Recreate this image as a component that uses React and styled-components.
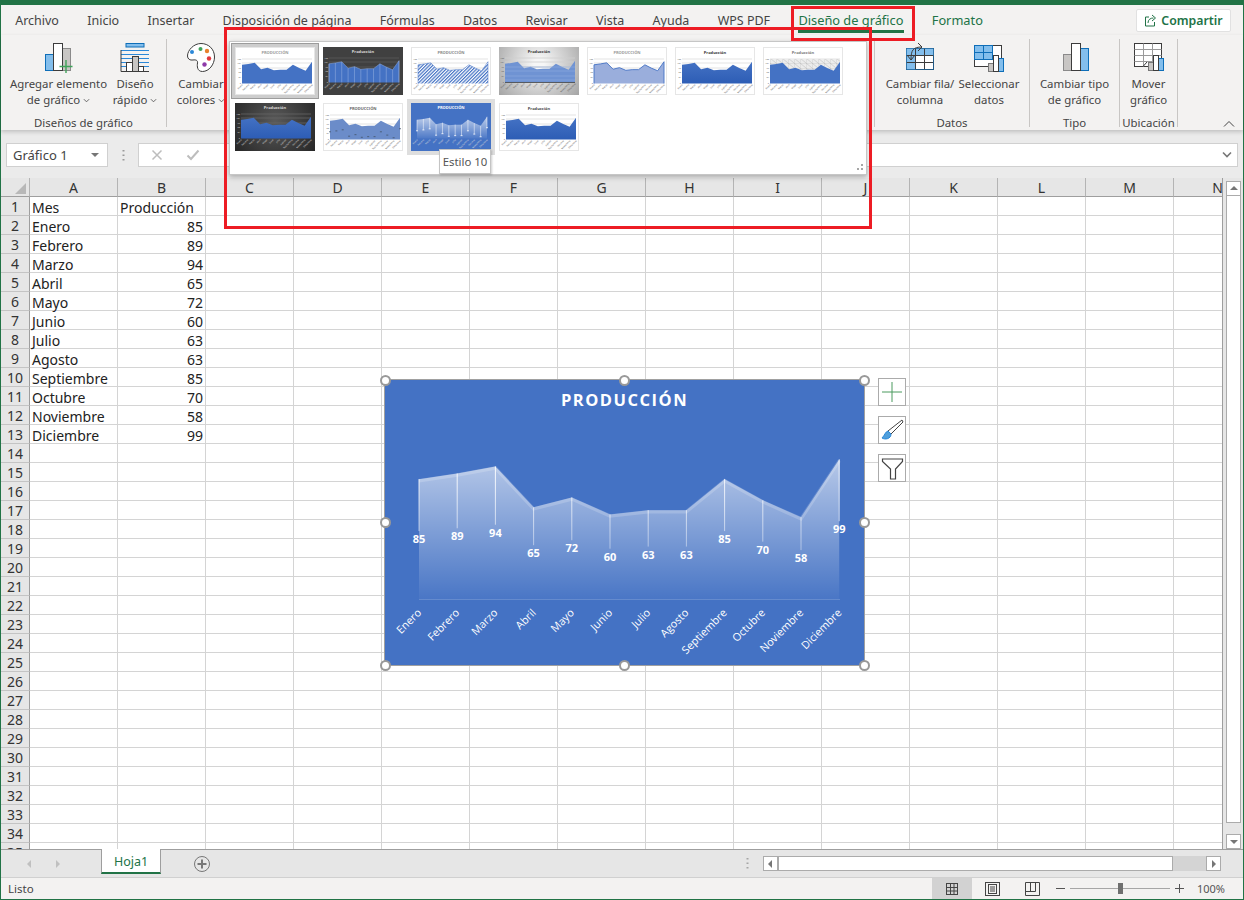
import React from 'react';
import styled, { createGlobalStyle } from 'styled-components';

const GREEN = '#217346';
const UI_FONT = '"Noto Sans", "Open Sans", sans-serif';

const GlobalStyle = createGlobalStyle`
  html, body {
    margin: 0;
    padding: 0;
    background: #fff;
    font-family: ${UI_FONT};
    overflow: hidden;
  }
`;

const Window = styled.div`
  position: relative;
  box-sizing: border-box;
  width: 1244px;
  height: 900px;
  padding: 5px 1px 1px;
  background: ${GREEN};
  display: flex;
  flex-direction: column;
  overflow: hidden;
`;

/* ---------- tabs ---------- */

const TabBar = styled.div`
  height: 30px;
  flex: none;
  display: flex;
  align-items: center;
  background: #f3f2f1;
`;

const Tab = styled.div`
  position: relative;
  height: 30px;
  line-height: 31px;
  padding: 0 14.15px;
  font-size: ${p => (p.$context ? 12.8 : 12.5)}px;
  white-space: nowrap;
  color: ${p => (p.$context ? GREEN : '#444')};

  ${p =>
    p.$active &&
    `&::after {
      content: '';
      position: absolute;
      left: 14px;
      right: 14px;
      bottom: 2px;
      height: 3px;
      background: ${GREEN};
    }`}
`;

const ShareButton = styled.div`
  box-sizing: border-box;
  margin-left: auto;
  margin-right: 12px;
  width: 95px;
  height: 23px;
  display: flex;
  align-items: center;
  justify-content: center;
  gap: 4px;
  background: #fff;
  border: 1px solid #e1e1e1;
  border-radius: 2px;
  color: ${GREEN};
  font-size: 12.3px;
  font-weight: 600;
`;

/* ---------- ribbon ---------- */

const Ribbon = styled.div`
  position: relative;
  z-index: 2;
  height: 95px;
  flex: none;
  display: flex;
  align-items: flex-start;
  background: #f3f2f1;
  box-shadow: 0 2px 4px rgba(0, 0, 0, 0.18);
`;

const Group = styled.div`
  box-sizing: border-box;
  width: ${p => p.$width}px;
  height: 95px;
  padding-top: 7px;
  display: flex;
  flex-direction: column;
`;

const GroupButtons = styled.div`
  display: flex;
  height: 66px;
  padding-left: ${p => p.$pad || 0}px;
  justify-content: ${p => (p.$pad ? 'flex-start' : 'center')};
`;

const GroupTitle = styled.div`
  margin-top: 8px;
  height: 14px;
  line-height: 14px;
  font-size: 11.4px;
  color: #444;
  text-align: center;
  white-space: nowrap;
`;

const Separator = styled.div`
  flex: none;
  width: 1px;
  height: 88px;
  margin-top: 4px;
  background: #c8c6c4;
`;

const RibbonButton = styled.div`
  flex: none;
  width: ${p => p.$width}px;
  display: flex;
  flex-direction: column;
  align-items: center;
`;

const IconSlot = styled.div`
  height: 32px;
  margin-bottom: 2px;
  display: flex;
  align-items: center;
  justify-content: center;
`;

const ButtonLabel = styled.div`
  font-size: 11.4px;
  line-height: 16px;
  color: #444;
  text-align: center;
  white-space: nowrap;
`;

const CollapseButton = styled.div`
  margin-left: auto;
  margin-right: 8px;
  margin-top: 85px;
  width: 12px;
  height: 8px;
  display: flex;
`;

/* ---------- formula bar ---------- */

const FormulaArea = styled.div`
  height: 48px;
  flex: none;
  box-sizing: border-box;
  padding: 13px 5px 11px;
  display: flex;
  align-items: stretch;
  background: #ebebeb;
`;

const NameBox = styled.div`
  box-sizing: border-box;
  width: 102px;
  padding: 0 7px 0 6px;
  display: flex;
  align-items: center;
  justify-content: space-between;
  background: #fff;
  border: 1px solid #d0d0d0;
  font-size: 13px;
  color: #444;
`;

const GripDots = styled.div`
  flex: none;
  width: 30px;
  display: flex;
  align-items: center;
  justify-content: center;
`;

const FormulaTools = styled.div`
  flex: none;
  box-sizing: border-box;
  width: 100px;
  display: flex;
  align-items: center;
  gap: 23px;
  padding-left: 12px;
  background: #fff;
  border: 1px solid #d0d0d0;
  border-right: 0;
`;

const FormulaInput = styled.div`
  flex: 1;
  display: flex;
  align-items: center;
  justify-content: flex-end;
  padding-right: 4px;
  background: #fff;
  border: 1px solid #d0d0d0;
  border-left: 0;
`;

/* ---------- sheet ---------- */

const Sheet = styled.div`
  flex: 1;
  min-height: 0;
  display: flex;
  background: #e6e6e6;
`;

const GridArea = styled.div`
  width: 1221px;
  flex: none;
  overflow: hidden;
  background: #fff;
`;

const Row = styled.div`
  display: grid;
  grid-template-columns: 29px repeat(14, 88px);
  grid-template-rows: 19px;
  height: 19px;
`;

const Corner = styled.div`
  box-sizing: border-box;
  position: relative;
  background: #e6e6e6;
  border-right: 1px solid #b4b4b4;
  border-bottom: 1px solid #9e9e9e;
  &::after {
    content: '';
    position: absolute;
    right: 3px;
    bottom: 2px;
    border-style: solid;
    border-width: 0 0 11px 11px;
    border-color: transparent transparent #b8b8b8 transparent;
  }
`;

const ColumnHeader = styled.div`
  box-sizing: border-box;
  height: 19px;
  background: #e6e6e6;
  border-right: 1px solid #b4b4b4;
  border-bottom: 1px solid #9e9e9e;
  font-size: 14px;
  line-height: 20px;
  color: #333;
  text-align: center;
`;

const RowHeader = styled.div`
  box-sizing: border-box;
  height: 19px;
  background: #e6e6e6;
  border-right: 1px solid #9e9e9e;
  border-bottom: 1px solid #c4c4c4;
  font-size: 14px;
  line-height: 20px;
  color: #333;
  text-align: center;
`;

const Cell = styled.div`
  box-sizing: border-box;
  height: 19px;
  padding: 0 2px;
  border-right: 1px solid #d4d4d4;
  border-bottom: 1px solid #d4d4d4;
  font-size: 14px;
  line-height: 21px;
  color: #222;
  white-space: nowrap;
  text-align: ${p => (p.$number ? 'right' : 'left')};
`;

const VScroll = styled.div`
  flex: 1;
  box-sizing: border-box;
  padding: 3px 3px 0;
  display: flex;
  flex-direction: column;
  border-left: 1px solid #9e9e9e;
`;

const ScrollButton = styled.div`
  box-sizing: border-box;
  flex: none;
  width: 15px;
  height: 15px;
  display: flex;
  align-items: center;
  justify-content: center;
  background: #fff;
  border: 1px solid #ababab;
`;

const VScrollThumb = styled.div`
  box-sizing: border-box;
  flex: none;
  width: 15px;
  height: 627px;
  background: #fff;
  border: 1px solid #ababab;
  border-top: 0;
`;

const VScrollTrack = styled.div`
  flex: 1;
`;

/* ---------- sheet tabs ---------- */

const SheetBar = styled.div`
  box-sizing: border-box;
  height: 28px;
  flex: none;
  display: flex;
  align-items: center;
  background: #e6e6e6;
  border-top: 1px solid #9e9e9e;
`;

const SheetNav = styled.div`
  width: 100px;
  flex: none;
  display: flex;
  gap: 18px;
  padding-left: 24px;
  box-sizing: border-box;
`;

const SheetTab = styled.div`
  box-sizing: border-box;
  flex: none;
  align-self: flex-start;
  margin-top: -1px;
  width: 60px;
  height: 25px;
  line-height: 25px;
  text-align: center;
  font-size: 12.5px;
  color: ${GREEN};
  background: #fff;
  border-left: 1px solid #9e9e9e;
  border-right: 1px solid #9e9e9e;
  border-bottom: 2px solid ${GREEN};
`;

const AddSheet = styled.div`
  flex: none;
  margin-left: 32px;
  display: flex;
`;

const BarSpacer = styled.div`
  flex: 1;
`;

const BarDots = styled.div`
  flex: none;
  width: 16px;
  display: flex;
  justify-content: center;
`;

const HScroll = styled.div`
  flex: none;
  box-sizing: border-box;
  width: 458px;
  height: 15px;
  margin-left: 8px;
  margin-right: 22px;
  display: flex;
  background: #d4d4d4;
`;

const HScrollThumb = styled.div`
  box-sizing: border-box;
  width: 395px;
  flex: none;
  background: #fff;
  border: 1px solid #ababab;
`;

/* ---------- status bar ---------- */

const StatusBar = styled.div`
  box-sizing: border-box;
  height: 22px;
  flex: none;
  display: flex;
  align-items: center;
  padding-left: 7px;
  background: #f3f2f1;
  border-top: 1px solid #d0d0d0;
  font-size: 11.5px;
  color: #444;
`;

const StatusRight = styled.div`
  margin-left: auto;
  height: 100%;
  display: flex;
  align-items: center;
`;

const ViewButton = styled.div`
  width: 40px;
  height: 100%;
  display: flex;
  align-items: center;
  justify-content: center;
  background: ${p => (p.$active ? '#d2d2d2' : 'transparent')};
`;

const ZoomSlider = styled.div`
  position: relative;
  width: 100px;
  height: 1px;
  margin: 0 3px;
  background: #a6a6a6;
`;

const ZoomThumb = styled.div`
  position: absolute;
  left: 48px;
  top: -5px;
  width: 5px;
  height: 11px;
  background: #6f6f6f;
`;

const ZoomGlyph = styled.div`
  display: flex;
  margin-left: ${p => p.$gap || 2}px;
  margin-right: 2px;
`;

const ZoomValue = styled.div`
  width: 30px;
  margin-left: 10px;
  margin-right: 17px;
  font-size: 11px;
  text-align: center;
  color: #555;
`;

/* ---------- style gallery over the ribbon ---------- */

const Gallery = styled.div`
  position: absolute;
  z-index: 5;
  left: 229px;
  top: 41px;
  box-sizing: border-box;
  width: 638px;
  height: 134px;
  padding: 1px;
  background: #fff;
  border: 1px solid #c6c6c6;
  box-shadow: 0 2px 5px rgba(0, 0, 0, 0.28);
`;

const GalleryGrid = styled.div`
  display: grid;
  grid-template-columns: repeat(7, 88px);
  grid-auto-rows: 56px;
`;

const GalleryCell = styled.div`
  box-sizing: border-box;
  display: flex;
  align-items: center;
  justify-content: center;
  background: ${p => (p.$selected ? '#cdcdcd' : p.$hover ? '#dedede' : 'transparent')};
  border: ${p => (p.$selected ? '1px solid #9c9c9c' : '1px solid transparent')};
`;

const ThumbFrame = styled.div`
  box-sizing: border-box;
  width: 80px;
  height: 48px;
  display: flex;
  background: ${p => p.$bg};
  border: ${p => (p.$border ? '1px solid #e6e6e6' : 'none')};
`;

const ResizeGrip = styled.div`
  position: absolute;
  right: 3px;
  bottom: 3px;
  display: flex;
`;

const Tooltip = styled.div`
  position: absolute;
  z-index: 6;
  left: 439px;
  top: 149px;
  box-sizing: border-box;
  width: 52px;
  height: 25px;
  line-height: 23px;
  text-align: center;
  font-size: 11.4px;
  color: #555;
  background: #fff;
  border: 1px solid #c4c4c4;
  box-shadow: 1px 1px 2px rgba(0, 0, 0, 0.2);
`;

const RedMark = styled.div`
  position: absolute;
  z-index: 7;
  box-sizing: border-box;
  left: ${p => p.$left}px;
  top: ${p => p.$top}px;
  width: ${p => p.$width}px;
  height: ${p => p.$height}px;
  border: 3px solid #ed1c24;
  pointer-events: none;
`;

/* ---------- chart on the sheet ---------- */

const ChartBox = styled.div`
  position: absolute;
  z-index: 1;
  left: 384px;
  top: 379px;
  box-sizing: border-box;
  width: 481px;
  height: 287px;
  background: #4472c4;
  border: 1px solid #a0a0a0;
  display: flex;
`;

const Handle = styled.div`
  position: absolute;
  left: ${p => p.$x}%;
  top: ${p => p.$y}%;
  box-sizing: border-box;
  width: 11px;
  height: 11px;
  margin: -5.5px 0 0 -5.5px;
  background: #fff;
  border: 2px solid #999;
  border-radius: 50%;
`;

const ChartTools = styled.div`
  position: absolute;
  z-index: 1;
  left: 878px;
  top: 378px;
  display: flex;
  flex-direction: column;
  gap: 10px;
`;

const ChartTool = styled.div`
  box-sizing: border-box;
  width: 28px;
  height: 28px;
  display: flex;
  align-items: center;
  justify-content: center;
  background: #fff;
  border: 1px solid #ababab;
`;

/* ---------- data ---------- */

const tabs = [
  'Archivo',
  'Inicio',
  'Insertar',
  'Disposición de página',
  'Fórmulas',
  'Datos',
  'Revisar',
  'Vista',
  'Ayuda',
  'WPS PDF',
];

const columns = 'ABCDEFGHIJKLMN'.split('');

const months = [
  'Enero',
  'Febrero',
  'Marzo',
  'Abril',
  'Mayo',
  'Junio',
  'Julio',
  'Agosto',
  'Septiembre',
  'Octubre',
  'Noviembre',
  'Diciembre',
];

const values = [85, 89, 94, 65, 72, 60, 63, 63, 85, 70, 58, 99];

const handles = [
  [0, 0],
  [50, 0],
  [100, 0],
  [0, 50],
  [100, 50],
  [0, 100],
  [50, 100],
  [100, 100],
];

const thumbs = [
  { id: 1, bg: '#fff', border: true, title: 'PRODUCCIÓN', titleColor: '#999', fill: '#4472c4' },
  { id: 2, bg: '#404040', title: 'Producción', titleColor: '#ddd', fill: '#4472c4', stroke: '#8faadc', drops: '#9db5e2', grid: '#5c5c5c', dark: true },
  { id: 3, bg: '#fff', border: true, title: 'PRODUCCIÓN', titleColor: '#888', fill: 'hatch', stroke: '#4472c4' },
  { id: 4, bg: 'radial-gradient(circle at 50% 35%, #f6f6f6 10%, #a4a4a4 100%)', title: 'Producción', titleColor: '#333', fill: '#6f93d3', floor: '#444', grid: '#cfcfcf', bands: true },
  { id: 5, bg: '#fff', border: true, title: 'PRODUCCIÓN', titleColor: '#999', fill: '#9aaedc', stroke: '#4472c4', strokeWidth: 0.9 },
  { id: 6, bg: '#fff', border: true, title: 'Producción', titleColor: '#333', fill: 'blue' },
  { id: 7, bg: '#fff', border: true, title: 'Producción', titleColor: '#777', fill: '#4472c4', sky: true },
  { id: 8, bg: 'radial-gradient(circle at 50% 40%, #5a5a5a 0%, #262626 100%)', title: 'Producción', titleColor: '#ddd', fill: 'blue', grid: '#666', dark: true },
  { id: 9, bg: '#fff', border: true, title: 'PRODUCCIÓN', titleColor: '#666', fill: '#6b8cc9', marks: '#44546a' },
  { id: 10, bg: '#4472c4', title: 'PRODUCCIÓN', titleColor: '#fff', fill: 'white', drops: '#fff', marks: '#fff', dark: true, noGrid: true },
  { id: 11, bg: '#fff', border: true, title: 'Producción', titleColor: '#444', fill: 'blue' },
];

/* ---------- small drawings ---------- */

const Chevron = ({ size = 7, color = '#555' }) => (
  <svg width={size} height={size} viewBox="0 0 8 8" style={{ marginLeft: 3 }}>
    <path d="M1 2.5 L4 5.5 L7 2.5" fill="none" stroke={color} strokeWidth="1" />
  </svg>
);

const AddElementIcon = () => (
  <svg width="32" height="32" viewBox="0 0 32 32">
    <rect x="2.5" y="12.5" width="8" height="16" fill="#83beec" stroke="#0e6eb8" />
    <rect x="19.5" y="6.5" width="8" height="22" fill="#c8c6c4" stroke="#8a8a8a" />
    <rect x="10.5" y="1.5" width="9" height="27" fill="#fff" stroke="#3c3c3c" />
    <path d="M23 18 V31 M16.5 24.5 H29.5" stroke="#3fa35a" strokeWidth="1.4" fill="none" />
  </svg>
);

const QuickLayoutIcon = () => (
  <svg width="30" height="32" viewBox="0 0 30 32">
    <rect x="6" y="1.5" width="18" height="3.5" fill="#83beec" stroke="#0e6eb8" />
    <path d="M1 8.5 H29 M1 12.5 H29 M1 16.5 H29 M1 20.5 H29 M1 24.5 H29" stroke="#2b88d8" fill="none" />
    <path d="M1 8 V29.5 H29" stroke="#3c3c3c" fill="none" />
    <rect x="12.5" y="14.5" width="6" height="15" fill="#c8c6c4" stroke="#3c3c3c" />
    <rect x="6.5" y="20.5" width="6" height="9" fill="#fff" stroke="#3c3c3c" />
    <rect x="18.5" y="24.5" width="5" height="5" fill="#fff" stroke="#3c3c3c" />
  </svg>
);

const PaletteIcon = () => (
  <svg width="30" height="32" viewBox="0 0 30 32">
    <path
      d="M15 1.5 C8 1.5 1.5 8 1.5 14 C1.5 17 4 18.5 7 18 C10 17.5 12 18.5 11.5 21 C11 24 11 29.5 16.5 29.5 C23 29.5 28.5 22.5 28.5 15 C28.5 7 22.5 1.5 15 1.5 Z"
      fill="#fff"
      stroke="#3c3c3c"
    />
    <circle cx="14.5" cy="7" r="2" fill="#3fa35a" />
    <circle cx="6" cy="10" r="2" fill="#2b88d8" />
    <circle cx="21" cy="9" r="2.2" fill="#e8822e" />
    <circle cx="23" cy="16.5" r="2.2" fill="#e0383e" />
    <circle cx="18.5" cy="22.5" r="2.2" fill="#8e3aa8" />
  </svg>
);

const SwitchRowColumnIcon = () => (
  <svg width="32" height="32" viewBox="0 0 32 32">
    <rect x="2.5" y="6.5" width="27" height="21" fill="#fff" stroke="#3c3c3c" />
    <rect x="2.5" y="6.5" width="27" height="7" fill="#83beec" />
    <rect x="2.5" y="6.5" width="9" height="21" fill="#83beec" />
    <path d="M2.5 13.5 H29.5 M2.5 20.5 H29.5 M11.5 6.5 V27.5 M20.5 6.5 V27.5" stroke="#3c3c3c" fill="none" />
    <rect x="2.5" y="6.5" width="27" height="21" fill="none" stroke="#0e6eb8" strokeOpacity="0.6" />
    <path d="M3 13 L7 18 L11 13 M7 18 C7 8 9 5 18 5 M14 1 L18 5 L14 9" fill="none" stroke="#3c3c3c" />
  </svg>
);

const SelectDataIcon = () => (
  <svg width="32" height="32" viewBox="0 0 32 32">
    <rect x="1.5" y="3.5" width="27" height="21" fill="#fff" stroke="#3c3c3c" />
    <rect x="1.5" y="3.5" width="18" height="14" fill="#83beec" stroke="#0e6eb8" />
    <path d="M1.5 10.5 H19.5 M10.5 3.5 V17.5" stroke="#0e6eb8" fill="none" />
    <rect x="15.5" y="21.5" width="5" height="8" fill="#c8c6c4" stroke="#777" />
    <rect x="25.5" y="16.5" width="5" height="13" fill="#83beec" stroke="#0e6eb8" />
    <rect x="20.5" y="13.5" width="5" height="16" fill="#fff" stroke="#3c3c3c" />
  </svg>
);

const ChangeTypeIcon = () => (
  <svg width="28" height="32" viewBox="0 0 28 32">
    <rect x="2.5" y="12.5" width="8" height="16" fill="#c8c6c4" stroke="#8a8a8a" />
    <rect x="19.5" y="6.5" width="8" height="22" fill="#83beec" stroke="#0e6eb8" />
    <rect x="10.5" y="1.5" width="9" height="27" fill="#fff" stroke="#3c3c3c" />
  </svg>
);

const MoveChartIcon = () => (
  <svg width="32" height="32" viewBox="0 0 32 32">
    <rect x="1.5" y="1.5" width="27" height="23" fill="#fff" stroke="#3c3c3c" />
    <path d="M1.5 7.5 H28.5 M1.5 13.5 H28.5 M1.5 19.5 H28.5 M10.5 1.5 V24.5 M19.5 1.5 V24.5" stroke="#9a9a9a" fill="none" />
    <path d="M1.5 24.5 H10 L14 20" fill="none" stroke="#3c3c3c" />
    <rect x="15.5" y="20.5" width="5" height="8" fill="#c8c6c4" stroke="#777" />
    <rect x="25.5" y="16.5" width="5" height="12" fill="#83beec" stroke="#0e6eb8" />
    <rect x="20.5" y="13.5" width="5" height="15" fill="#fff" stroke="#3c3c3c" />
  </svg>
);

const ShareIcon = () => (
  <svg width="13" height="13" viewBox="0 0 13 13">
    <path d="M5 3 H1.5 V12 H10.5 V8" fill="none" stroke="#217346" />
    <path d="M4 9 C4 5.5 6.5 4 9.5 4 M8 1 L11.5 4 L8 7" fill="none" stroke="#217346" />
  </svg>
);

const AreaThumb = ({ spec }) => {
  const width = spec.border ? 78 : 80;
  const height = spec.border ? 46 : 48;
  const px = i => 6 + (i * 70) / 11;
  const py = v => 35.5 - v * 0.22;
  const line = values.map((v, i) => `${px(i)},${py(v)}`).join(' ');
  const area = `6,35.5 ${line} 76,35.5`;
  const sky = `6,11 76,11 ${values
    .map((v, i) => `${px(11 - i)},${py(values[11 - i])}`)
    .join(' ')}`;
  const fills = {
    hatch: `url(#hatch${spec.id})`,
    blue: `url(#blue${spec.id})`,
    white: `url(#white${spec.id})`,
  };
  const gridColor = spec.grid || '#dcdcdc';
  const labelColor = spec.dark ? '#dcdcdc' : '#5c5c5c';

  return (
    <svg width={width} height={height} viewBox={`0 0 ${width} ${height}`}>
      <defs>
        <pattern id={`hatch${spec.id}`} width="2.4" height="2.4" patternUnits="userSpaceOnUse" patternTransform="rotate(45)">
          <rect width="2.4" height="2.4" fill="#fff" />
          <rect width="1.2" height="2.4" fill="#4472c4" />
        </pattern>
        <pattern id={`sky${spec.id}`} width="6" height="5" patternUnits="userSpaceOnUse">
          <rect width="6" height="5" fill="#ececec" />
          <path d="M0 0 L6 5 M0 0 H6 M0 0 V5" stroke="#b4b4b4" strokeWidth="0.5" />
        </pattern>
        <linearGradient id={`blue${spec.id}`} x1="0" y1="0" x2="0" y2="1">
          <stop offset="0" stopColor="#4472c4" />
          <stop offset="1" stopColor="#2d5db5" />
        </linearGradient>
        <linearGradient id={`white${spec.id}`} x1="0" y1="0" x2="0" y2="1">
          <stop offset="0" stopColor="#fff" stopOpacity="0.65" />
          <stop offset="1" stopColor="#fff" stopOpacity="0.05" />
        </linearGradient>
      </defs>
      <text x={width / 2} y="5.5" textAnchor="middle" fontSize="4" fontWeight="700" fontFamily="Open Sans, sans-serif" fill={spec.titleColor}>
        {spec.title}
      </text>
      {!spec.noGrid &&
        [11, 15, 20, 24, 29].map(y => (
          <line key={y} x1="6" x2="76" y1={y} y2={y} stroke={gridColor} strokeWidth="0.8" />
        ))}
      {!spec.noGrid &&
        [11, 15, 20, 24, 29, 35].map(y => (
          <text key={y} x="5" y={y + 0.8} textAnchor="end" fontSize="2.2" fill={labelColor}>
            {Math.round((36 - y) * 4.8)}
          </text>
        ))}
      {spec.sky && <polygon points={sky} fill={`url(#sky${spec.id})`} />}
      <polygon points={area} fill={fills[spec.fill] || spec.fill} />
      {spec.bands &&
        [20, 24, 29, 33].map(y => (
          <line key={y} x1="6" x2="76" y1={y} y2={y} stroke="#8fabdf" strokeWidth="0.6" />
        ))}
      {spec.stroke && (
        <polyline points={area} fill="none" stroke={spec.stroke} strokeWidth={spec.strokeWidth || 0.5} />
      )}
      {spec.drops &&
        values.map((v, i) => (
          <line key={i} x1={px(i)} x2={px(i)} y1={py(v)} y2={spec.marks ? py(v) + 11 : 35.5} stroke={spec.drops} strokeWidth="0.5" />
        ))}
      {spec.marks &&
        values.map((v, i) => (
          <line key={i} x1={px(i) - 1} x2={px(i) + 1} y1={py(v) + 11} y2={py(v) + 11} stroke={spec.marks} strokeWidth="0.8" />
        ))}
      {spec.floor && <line x1="6" x2="76" y1="35.5" y2="35.5" stroke={spec.floor} strokeWidth="0.8" />}
      {months.map((m, i) => (
        <text key={m} x={px(i) + 1} y="37" textAnchor="end" fontSize="2.3" fill={labelColor} transform={`rotate(-45 ${px(i) + 1} 37)`}>
          {m}
        </text>
      ))}
    </svg>
  );
};

const ProductionChart = () => {
  const px = i => 419 + i * 38.2;
  const py = v => 599 - v * 1.41;
  const mid = v => (py(v) + 599) / 2;
  const line = values.map((v, i) => `${px(i)},${py(v)}`).join(' ');

  return (
    <svg width="479" height="285" viewBox="385 380 479 285">
      <defs>
        <linearGradient id="areaFade" gradientUnits="userSpaceOnUse" x1="0" y1="458" x2="0" y2="599">
          <stop offset="0" stopColor="#fff" stopOpacity="0.62" />
          <stop offset="1" stopColor="#fff" stopOpacity="0.03" />
        </linearGradient>
        <linearGradient id="dropFade" gradientUnits="userSpaceOnUse" x1="0" y1="458" x2="0" y2="560">
          <stop offset="0" stopColor="#fff" stopOpacity="1" />
          <stop offset="1" stopColor="#fff" stopOpacity="0.35" />
        </linearGradient>
      </defs>
      <text x="624.5" y="406" textAnchor="middle" fontSize="16.5" fontWeight="700" letterSpacing="1.5" fontFamily="Open Sans, sans-serif" fill="#fff">
        PRODUCCIÓN
      </text>
      <polygon points={`419,599 ${line} 839.2,599`} fill="url(#areaFade)" />
      <polyline points={line} fill="none" stroke="#fff" strokeOpacity="0.18" strokeWidth="3.5" transform="translate(0 1.5)" />
      <line x1="419" x2="840" y1="599.5" y2="599.5" stroke="#fff" strokeOpacity="0.18" />
      {values.map((v, i) => (
        <line key={i} x1={px(i)} x2={px(i)} y1={py(v)} y2={mid(v) - 8} stroke="url(#dropFade)" strokeWidth="1" />
      ))}
      {values.map((v, i) => (
        <text key={i} x={px(i)} y={mid(v) + 4} textAnchor="middle" fontSize="11" fontWeight="700" fontFamily="Open Sans, sans-serif" fill="#fff">
          {v}
        </text>
      ))}
      {months.map((m, i) => (
        <text key={m} x={px(i) + 3} y="613.5" textAnchor="end" fontSize="10.8" fontFamily="Open Sans, sans-serif" fill="#fff" transform={`rotate(-45 ${px(i) + 3} 613.5)`}>
          {m}
        </text>
      ))}
    </svg>
  );
};

const Triangle = ({ dir, color = '#767676' }) => {
  const paths = {
    up: 'M1 6 L5 2 L9 6 Z',
    down: 'M1 3 L5 7 L9 3 Z',
    left: 'M6 1 L2 5 L6 9 Z',
    right: 'M3 1 L7 5 L3 9 Z',
  };
  return (
    <svg width="10" height="10" viewBox="0 0 10 10">
      <path d={paths[dir]} fill={color} />
    </svg>
  );
};

const SpreadsheetRows = () => {
  const rows = [];
  for (let n = 1; n <= 35; n++) {
    const month = n > 1 && n <= 13 ? months[n - 2] : n === 1 ? 'Mes' : '';
    const amount = n > 1 && n <= 13 ? values[n - 2] : n === 1 ? 'Producción' : '';
    rows.push(
      <Row key={n}>
        <RowHeader>{n}</RowHeader>
        <Cell>{month}</Cell>
        <Cell $number={n > 1}>{amount}</Cell>
        {columns.slice(2).map(c => (
          <Cell key={c} />
        ))}
      </Row>
    );
  }
  return rows;
};

export default function App() {
  return (
    <>
      <GlobalStyle />
      <Window>
        <TabBar>
          {tabs.map(t => (
            <Tab key={t}>{t}</Tab>
          ))}
          <Tab $context $active>
            Diseño de gráfico
          </Tab>
          <Tab $context>Formato</Tab>
          <ShareButton>
            <ShareIcon />
            Compartir
          </ShareButton>
        </TabBar>

        <Ribbon>
          <Group $width={165}>
            <GroupButtons $pad={10}>
              <RibbonButton $width={95}>
                <IconSlot>
                  <AddElementIcon />
                </IconSlot>
                <ButtonLabel>Agregar elemento</ButtonLabel>
                <ButtonLabel>
                  de gráfico
                  <Chevron />
                </ButtonLabel>
              </RibbonButton>
              <RibbonButton $width={58}>
                <IconSlot>
                  <QuickLayoutIcon />
                </IconSlot>
                <ButtonLabel>Diseño</ButtonLabel>
                <ButtonLabel>
                  rápido
                  <Chevron />
                </ButtonLabel>
              </RibbonButton>
            </GroupButtons>
            <GroupTitle>Diseños de gráfico</GroupTitle>
          </Group>
          <Separator />
          <Group $width={707}>
            <GroupButtons $pad={4}>
              <RibbonButton $width={60}>
                <IconSlot>
                  <PaletteIcon />
                </IconSlot>
                <ButtonLabel>Cambiar</ButtonLabel>
                <ButtonLabel>
                  colores
                  <Chevron />
                </ButtonLabel>
              </RibbonButton>
            </GroupButtons>
          </Group>
          <Separator />
          <Group $width={154}>
            <GroupButtons $pad={9}>
              <RibbonButton $width={72}>
                <IconSlot>
                  <SwitchRowColumnIcon />
                </IconSlot>
                <ButtonLabel>Cambiar fila/</ButtonLabel>
                <ButtonLabel>columna</ButtonLabel>
              </RibbonButton>
              <RibbonButton $width={66}>
                <IconSlot>
                  <SelectDataIcon />
                </IconSlot>
                <ButtonLabel>Seleccionar</ButtonLabel>
                <ButtonLabel>datos</ButtonLabel>
              </RibbonButton>
            </GroupButtons>
            <GroupTitle>Datos</GroupTitle>
          </Group>
          <Separator />
          <Group $width={89}>
            <GroupButtons>
              <RibbonButton $width={80}>
                <IconSlot>
                  <ChangeTypeIcon />
                </IconSlot>
                <ButtonLabel>Cambiar tipo</ButtonLabel>
                <ButtonLabel>de gráfico</ButtonLabel>
              </RibbonButton>
            </GroupButtons>
            <GroupTitle>Tipo</GroupTitle>
          </Group>
          <Separator />
          <Group $width={57}>
            <GroupButtons>
              <RibbonButton $width={50}>
                <IconSlot>
                  <MoveChartIcon />
                </IconSlot>
                <ButtonLabel>Mover</ButtonLabel>
                <ButtonLabel>gráfico</ButtonLabel>
              </RibbonButton>
            </GroupButtons>
            <GroupTitle>Ubicación</GroupTitle>
          </Group>
          <Separator />
          <CollapseButton>
            <svg width="12" height="8" viewBox="0 0 12 8">
              <path d="M1 6.5 L6 1.5 L11 6.5" fill="none" stroke="#444" strokeWidth="1" />
            </svg>
          </CollapseButton>
        </Ribbon>

        <FormulaArea>
          <NameBox>
            Gráfico 1
            <Triangle dir="down" />
          </NameBox>
          <GripDots>
            <svg width="3" height="13" viewBox="0 0 3 13">
              <path d="M1.5 1 V2.5 M1.5 5.5 V7 M1.5 10 V11.5" stroke="#9a9a9a" strokeWidth="2" />
            </svg>
          </GripDots>
          <FormulaTools>
            <svg width="12" height="12" viewBox="0 0 12 12">
              <path d="M1.5 1.5 L10.5 10.5 M10.5 1.5 L1.5 10.5" stroke="#bdbdbd" strokeWidth="1.5" />
            </svg>
            <svg width="14" height="12" viewBox="0 0 14 12">
              <path d="M1.5 6.5 L5 10 L12.5 1.5" fill="none" stroke="#bdbdbd" strokeWidth="2" />
            </svg>
          </FormulaTools>
          <FormulaInput>
            <svg width="12" height="8" viewBox="0 0 12 8">
              <path d="M2 1.5 L6 5.5 L10 1.5" fill="none" stroke="#777" strokeWidth="1.6" />
            </svg>
          </FormulaInput>
        </FormulaArea>

        <Sheet>
          <GridArea>
            <Row>
              <Corner />
              {columns.map(c => (
                <ColumnHeader key={c}>{c}</ColumnHeader>
              ))}
            </Row>
            <SpreadsheetRows />
          </GridArea>
          <VScroll>
            <ScrollButton>
              <Triangle dir="up" />
            </ScrollButton>
            <VScrollThumb />
            <VScrollTrack />
            <ScrollButton>
              <Triangle dir="down" />
            </ScrollButton>
          </VScroll>
        </Sheet>

        <SheetBar>
          <SheetNav>
            <Triangle dir="left" color="#c0c0c0" />
            <Triangle dir="right" color="#c0c0c0" />
          </SheetNav>
          <SheetTab>Hoja1</SheetTab>
          <AddSheet>
            <svg width="18" height="18" viewBox="0 0 18 18">
              <circle cx="9" cy="9" r="7.5" fill="none" stroke="#777" />
              <path d="M9 4.5 V13.5 M4.5 9 H13.5" stroke="#777" strokeWidth="2" />
            </svg>
          </AddSheet>
          <BarSpacer />
          <BarDots>
            <svg width="3" height="13" viewBox="0 0 3 13">
              <path d="M1.5 1 V2.5 M1.5 5.5 V7 M1.5 10 V11.5" stroke="#a6a6a6" strokeWidth="2" />
            </svg>
          </BarDots>
          <HScroll>
            <ScrollButton>
              <Triangle dir="left" />
            </ScrollButton>
            <HScrollThumb />
            <BarSpacer />
            <ScrollButton>
              <Triangle dir="right" />
            </ScrollButton>
          </HScroll>
        </SheetBar>

        <StatusBar>
          Listo
          <StatusRight>
            <ViewButton $active>
              <svg width="14" height="14" viewBox="0 0 14 14">
                <path d="M1.5 1 V13 M5.5 1 V13 M9 1 V13 M12.5 1 V13 M1 1.5 H13 M1 5.5 H13 M1 9 H13 M1 12.5 H13" stroke="#444" fill="none" />
              </svg>
            </ViewButton>
            <ViewButton>
              <svg width="15" height="14" viewBox="0 0 15 14">
                <rect x="0.5" y="0.5" width="14" height="13" fill="none" stroke="#444" />
                <rect x="3.5" y="2.5" width="8" height="9" fill="none" stroke="#444" />
                <path d="M5 5 H10 M5 7 H10 M5 9 H10" stroke="#444" />
              </svg>
            </ViewButton>
            <ViewButton>
              <svg width="15" height="14" viewBox="0 0 15 14">
                <path d="M0.5 0.5 H14.5 V13.5 H0.5 Z M0.5 9.5 H10.5 V0.5 M5.5 0.5 V9.5" fill="none" stroke="#444" />
              </svg>
            </ViewButton>
            <ZoomGlyph $gap={4}>
              <svg width="9" height="9" viewBox="0 0 9 9">
                <path d="M0 4.5 H9" stroke="#555" />
              </svg>
            </ZoomGlyph>
            <ZoomSlider>
              <ZoomThumb />
            </ZoomSlider>
            <ZoomGlyph>
              <svg width="9" height="9" viewBox="0 0 9 9">
                <path d="M0 4.5 H9 M4.5 0 V9" stroke="#555" />
              </svg>
            </ZoomGlyph>
            <ZoomValue>100%</ZoomValue>
          </StatusRight>
        </StatusBar>

        <Gallery>
          <GalleryGrid>
            {thumbs.map(spec => (
              <GalleryCell key={spec.id} $selected={spec.id === 1} $hover={spec.id === 10}>
                <ThumbFrame $bg={spec.bg} $border={spec.border}>
                  <AreaThumb spec={spec} />
                </ThumbFrame>
              </GalleryCell>
            ))}
          </GalleryGrid>
          <ResizeGrip>
            <svg width="7" height="7" viewBox="0 0 7 7">
              <path d="M5 0 H7 V2 H5 Z M1 4 H3 V6 H1 Z M5 4 H7 V6 H5 Z" fill="#a6a6a6" />
            </svg>
          </ResizeGrip>
        </Gallery>
        <Tooltip>Estilo 10</Tooltip>

        <ChartBox>
          <ProductionChart />
          {handles.map(([x, y]) => (
            <Handle key={`${x}-${y}`} $x={x} $y={y} />
          ))}
        </ChartBox>
        <ChartTools>
          <ChartTool>
            <svg width="22" height="22" viewBox="0 0 22 22">
              <path d="M11 1 V21 M1 11 H21" stroke="#4a9a5f" strokeWidth="1" />
            </svg>
          </ChartTool>
          <ChartTool>
            <svg width="24" height="24" viewBox="0 0 24 24">
              <path d="M22 2 L23 4 L11 16 L8 13 Z" fill="#fff" stroke="#444" />
              <path d="M8 13 C5 14 5 17 2 20 C5 22 11 21 11 16 Z" fill="#4f9fdc" stroke="#2b88d8" />
            </svg>
          </ChartTool>
          <ChartTool>
            <svg width="24" height="24" viewBox="0 0 24 24">
              <path d="M2.5 3 H22.5 V5.5 L15.5 13 V23 H10.5 V13 L2.5 5.5 Z" fill="#fff" stroke="#444" strokeWidth="1.2" />
            </svg>
          </ChartTool>
        </ChartTools>

        <RedMark $left={224} $top={27} $width={648} $height={202} />
        <RedMark $left={791} $top={6} $width={124} $height={35} />
      </Window>
    </>
  );
}
